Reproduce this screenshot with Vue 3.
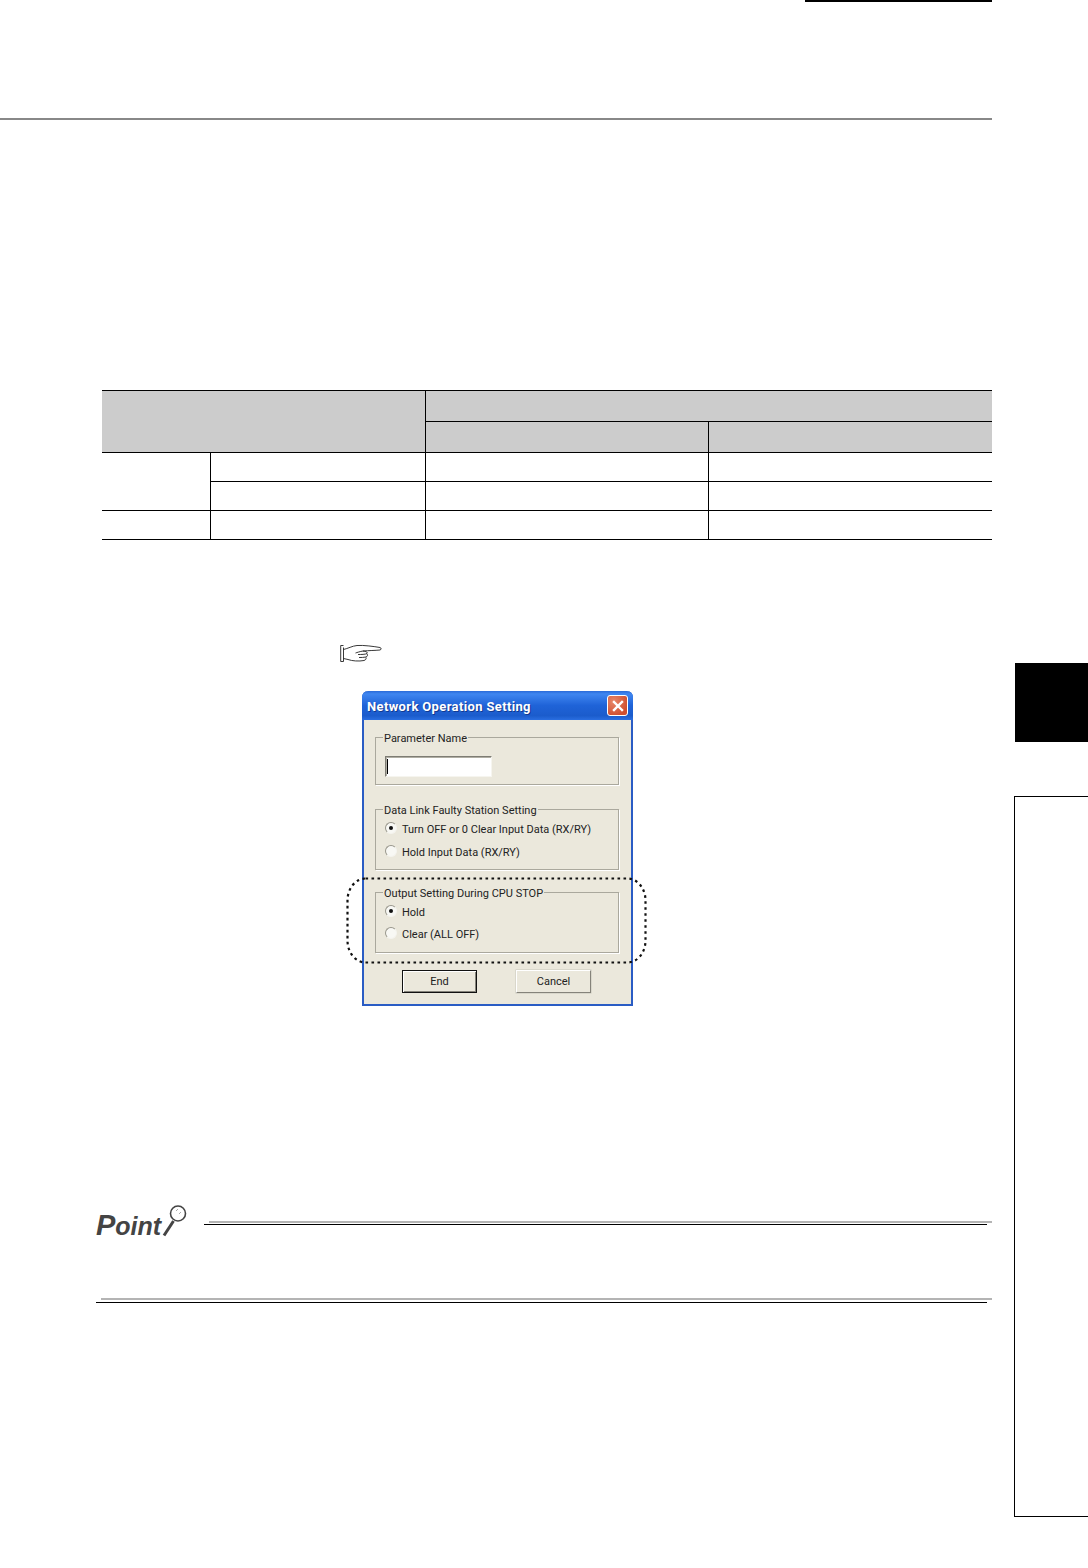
<template>
  <div class="page">
    <main class="main">
      <div class="top-mark"></div>
      <div class="head-rule"></div>

      <table class="spec">
        <colgroup>
          <col style="width: 108px" />
          <col style="width: 215px" />
          <col style="width: 283px" />
          <col style="width: 284px" />
        </colgroup>
        <tr class="h">
          <th colspan="2" rowspan="2"></th>
          <th colspan="2"></th>
        </tr>
        <tr class="h">
          <th></th>
          <th></th>
        </tr>
        <tr>
          <td rowspan="2"></td>
          <td></td>
          <td></td>
          <td></td>
        </tr>
        <tr>
          <td></td>
          <td></td>
          <td></td>
        </tr>
        <tr>
          <td></td>
          <td></td>
          <td></td>
          <td></td>
        </tr>
      </table>

      <svg class="hand" width="44" height="20" viewBox="0 0 44 20" fill="none" stroke="#222" stroke-width="0.9">
        <path d="M3.5 3.5V17.5H0.7V1.5H3.5" />
        <path d="M3.5 5.5C8 4.5 12 2 17 1.5C24 1 34 2.5 40 3.5C41.5 4 41.5 5.5 40 6C35 6.5 29 6.5 23 7C20 7.5 17 8.5 15.5 9" />
        <path d="M23 7C26 7.5 28 8 27 9.5C25.5 10.5 21 10.5 18 10.5" />
        <path d="M27 10C28 11 27.5 12.5 26 13C24 13.5 21 13.5 19 13.5" />
        <path d="M26 13.5C26.5 15 25.5 16 24 16.5C19 17.5 12 17 8 15.5L3.5 14.5" />
      </svg>

      <div class="dialog-wrap">
        <section class="dialog">
          <header class="titlebar">
            <span>Network Operation Setting</span>
            <button class="close" aria-label="Close">
              <svg width="12" height="12" viewBox="0 0 12 12" stroke="#fff" stroke-width="2.4" stroke-linecap="square">
                <path d="M2 2L10 10M10 2L2 10" />
              </svg>
            </button>
          </header>

          <div class="body">
            <fieldset class="group g-name">
              <legend>Parameter Name</legend>
              <div class="field"><i class="caret"></i></div>
            </fieldset>

            <fieldset v-for="g in groups" :key="g.title" class="group g-radio" :class="g.cls">
              <legend>{{ g.title }}</legend>
              <div v-for="(o, i) in g.options" :key="o" class="radio-row">
                <span class="radio" :class="{ on: i === 0 }"></span>
                <span class="radio-label">{{ o }}</span>
              </div>
            </fieldset>

            <div class="buttons">
              <button class="btn primary">End</button>
              <button class="btn">Cancel</button>
            </div>
          </div>
        </section>

        <svg class="callout" width="302" height="88" viewBox="0 0 302 88" fill="none">
          <rect x="1.5" y="1.5" width="298" height="84" rx="18" ry="22" stroke="#111" stroke-width="2.2" stroke-dasharray="2.6 3.4" />
        </svg>
      </div>

      <section class="point">
        <div class="point-head">
          <div class="logo">
            <span class="logo-p">P</span><span class="logo-rest">oint</span>
            <svg class="glass" width="28" height="34" viewBox="0 0 28 34" fill="none">
              <circle cx="18" cy="9.5" r="7.5" fill="#fff" stroke="#444" stroke-width="1.6" />
              <path d="M16 7L18 5M19 10L21 8" stroke="#aaa" stroke-width="1" />
              <path d="M13.5 17L4 31.5" stroke="#444" stroke-width="3" />
            </svg>
          </div>
          <div class="rules">
            <div class="rule-gray"></div>
            <div class="rule-black"></div>
          </div>
        </div>
        <div class="point-foot">
          <div class="rule-gray"></div>
          <div class="rule-black"></div>
        </div>
      </section>
    </main>

    <aside class="side">
      <div class="tab"></div>
      <div class="index-box"></div>
    </aside>
  </div>
</template>

<script setup>
const groups = [
  {
    title: 'Data Link Faulty Station Setting',
    cls: 'g-link',
    options: ['Turn OFF or 0 Clear Input Data (RX/RY)', 'Hold Input Data (RX/RY)']
  },
  {
    title: 'Output Setting During CPU STOP',
    cls: 'g-output',
    options: ['Hold', 'Clear (ALL OFF)']
  }
]
</script>

<style>
html, body {
  background: #fff;
}
</style>

<style scoped>
.page {
  display: flex;
  width: 1088px;
  height: 1568px;
  overflow: hidden;
  background: #fff;
  font-family: Roboto, "Liberation Sans", sans-serif;
}

.main {
  width: 992px;
  flex: none;
}

.top-mark {
  height: 2px;
  margin-left: 805px;
  background: #000;
}

.head-rule {
  height: 2px;
  margin-top: 116px;
  background: #888;
}

.spec {
  width: 890px;
  margin: 270px 0 0 102px;
  border-collapse: collapse;
  table-layout: fixed;
}

.spec th,
.spec td {
  padding: 0;
  border: 1px solid #000;
  height: 28px;
}

.spec tr > :last-child {
  border-right: none;
}

.spec tr > :first-child {
  border-left: none;
}

.spec tr.h th {
  height: 30px;
  background: #ccc;
}

.spec tr.h + tr.h th:first-child {
  border-left: 1px solid #000;
}

.hand {
  display: block;
  margin: 104px 0 0 340px;
}

.dialog-wrap {
  position: relative;
  width: 271px;
  margin: 27px 0 0 362px;
}

.dialog {
  width: 271px;
  height: 315px;
  box-sizing: border-box;
  background: #ebe8dc;
  border: 2px solid #2a5cc4;
  border-top: none;
  border-radius: 6px 6px 0 0;
  font-size: 11px;
  color: #222;
}

.titlebar {
  display: flex;
  align-items: center;
  justify-content: space-between;
  height: 29px;
  margin: 0 -2px;
  padding: 1px 5px 0 5px;
  box-sizing: border-box;
  border-radius: 6px 6px 0 0;
  background: linear-gradient(#2a6ad8 0, #3f86f0 10%, #1f63d8 50%, #1b5ccc 85%, #2a6ee0 100%);
  color: #fff;
  font-size: 13px;
  font-weight: 700;
  letter-spacing: 0.36px;
  text-shadow: 1px 1px 0 #123a90;
}

.close {
  display: flex;
  align-items: center;
  justify-content: center;
  width: 21px;
  height: 21px;
  margin-top: -1px;
  padding: 0;
  border: 1px solid #fff;
  border-radius: 3px;
  background: radial-gradient(circle at 30% 30%, #e8886a, #cf4f30 75%);
}

.body {
  padding: 0 12px 0 11px;
}

.group {
  box-sizing: border-box;
  margin: 0;
  min-width: 0;
  padding: 0 0 0 7px;
  border: 1px solid #aaa89d;
  box-shadow: 1px 1px 0 #fff;
}

.group legend {
  position: relative;
  top: 2px;
  padding: 0 1px;
  line-height: 14px;
  height: 14px;
}

.g-name {
  height: 55px;
  margin-top: 10px;
  padding-top: 12px;
}

.g-radio {
  height: 68px;
  margin-top: 17px;
  padding-top: 1px;
}

.g-radio + .g-radio {
  margin-top: 15px;
}

.g-link .radio-row + .radio-row {
  margin-top: 1px;
}

.field {
  width: 107px;
  height: 21px;
  margin-left: 2px;
  box-sizing: border-box;
  display: flex;
  align-items: center;
  padding-left: 1px;
  background: #fff;
  border: 1px solid;
  border-color: #7e7c74 #f6f5ef #f6f5ef #7e7c74;
  box-shadow: inset 1px 1px 0 #b0aea4;
}

.caret {
  width: 1px;
  height: 15px;
  background: #000;
}

.radio-row {
  display: flex;
  align-items: center;
  gap: 5px;
  height: 22px;
  margin-left: 2px;
  white-space: nowrap;
}

.radio-label {
  padding-top: 2px;
}

.radio {
  position: relative;
  width: 12px;
  height: 12px;
  flex: none;
  box-sizing: border-box;
  border: 1px solid;
  border-color: #98968b #f4f3ee #f4f3ee #98968b;
  border-radius: 50%;
  background: #f8f8f4;
}

.radio.on::after {
  content: "";
  position: absolute;
  left: 3px;
  top: 3px;
  width: 4px;
  height: 4px;
  border-radius: 50%;
  background: #111;
}

.buttons {
  display: flex;
  gap: 39px;
  margin: 17px 0 0 27px;
}

.btn {
  width: 75px;
  height: 23px;
  padding: 0 0 1px;
  box-sizing: border-box;
  background: #ebe8dc;
  border: 1px solid;
  border-color: #fff #85837a #85837a #fff;
  box-shadow: 0 0 0 0.5px #c8c6ba;
  font: inherit;
  color: #222;
}

.btn.primary {
  border-color: #111;
  box-shadow: inset 1px 1px 0 #fff, inset -1px -1px 0 #85837a;
}

.callout {
  position: absolute;
  left: -16px;
  top: 186px;
}

.point {
  margin: 204px 0 0 96px;
}

.point-head {
  display: flex;
  align-items: flex-start;
}

.logo {
  position: relative;
  width: 108px;
  height: 30px;
  flex: none;
  color: #444;
  font-family: "Liberation Sans", sans-serif;
  font-style: italic;
  font-weight: 700;
  line-height: 30px;
  white-space: nowrap;
}

.logo-p {
  font-size: 29px;
}

.logo-rest {
  font-size: 25px;
}

.glass {
  position: absolute;
  left: 64px;
  top: -6px;
}

.rules {
  flex: 1;
  padding-top: 11px;
}

.rule-gray {
  height: 2px;
  margin-left: 5px;
  background: #b4b4b4;
}

.rule-black {
  height: 1px;
  margin-top: 1px;
  margin-right: 5px;
  background: #000;
}

.point-foot {
  margin-top: 58px;
}

.point-foot .rule-black {
  margin-top: 2px;
}

.side {
  flex: none;
  width: 96px;
  padding: 663px 0 0 22px;
  box-sizing: border-box;
}

.tab {
  width: 73px;
  height: 79px;
  margin-left: 1px;
  background: #000;
}

.index-box {
  height: 721px;
  margin-top: 54px;
  box-sizing: border-box;
  border: 1px solid #000;
  border-right: none;
}
</style>
